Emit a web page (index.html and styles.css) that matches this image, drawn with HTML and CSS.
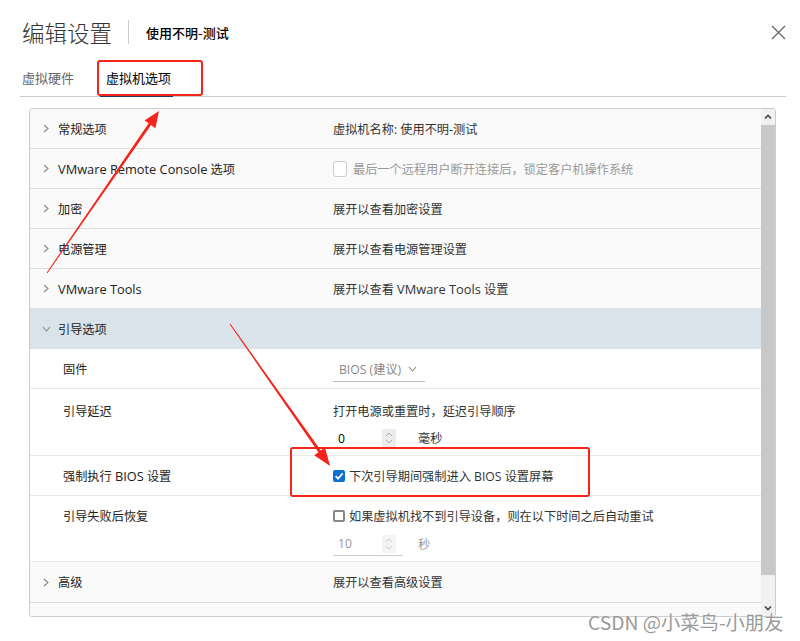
FILE: index.html
```html
<!DOCTYPE html>
<html lang="zh-CN">
<head>
<meta charset="utf-8">
<title>编辑设置</title>
<link rel="stylesheet" href="styles.css">
</head>
<body>
<div class="page">
  <header class="hdr">
    <h1 class="title">编辑设置</h1>
    <span class="vdiv"></span>
    <span class="sub">使用不明-测试</span>
    <span class="close"><svg width="15" height="15" viewBox="0 0 15 15"><path d="M1 1 L14 14 M14 1 L1 14" stroke="#666" stroke-width="1.3" fill="none"/></svg></span>
  </header>
  <nav class="tabs">
    <span class="tab">虚拟硬件</span>
    <span class="tab active">虚拟机选项</span>
  </nav>
  <section class="panel">
    <div class="list">
      <div class="row">
        <div class="lab"><svg class="chev" viewBox="0 0 6 9"><path d="M1 1 L5 4.5 L1 8" stroke="#888" fill="none" stroke-width="1.1"/></svg>常规选项</div>
        <div class="val">虚拟机名称: 使用不明-测试</div>
      </div>
      <div class="row">
        <div class="lab"><svg class="chev" viewBox="0 0 6 9"><path d="M1 1 L5 4.5 L1 8" stroke="#888" fill="none" stroke-width="1.1"/></svg><span class="en">VMware Remote Console</span>&nbsp;选项</div>
        <div class="val muted"><span class="cb-dis"></span>最后一个远程用户断开连接后，锁定客户机操作系统</div>
      </div>
      <div class="row">
        <div class="lab"><svg class="chev" viewBox="0 0 6 9"><path d="M1 1 L5 4.5 L1 8" stroke="#888" fill="none" stroke-width="1.1"/></svg>加密</div>
        <div class="val">展开以查看加密设置</div>
      </div>
      <div class="row">
        <div class="lab"><svg class="chev" viewBox="0 0 6 9"><path d="M1 1 L5 4.5 L1 8" stroke="#888" fill="none" stroke-width="1.1"/></svg>电源管理</div>
        <div class="val">展开以查看电源管理设置</div>
      </div>
      <div class="row">
        <div class="lab"><svg class="chev" viewBox="0 0 6 9"><path d="M1 1 L5 4.5 L1 8" stroke="#888" fill="none" stroke-width="1.1"/></svg><span class="en">VMware Tools</span></div>
        <div class="val">展开以查看&nbsp;<span class="en">VMware Tools</span>&nbsp;设置</div>
      </div>
      <div class="row open">
        <div class="lab"><svg class="chev-d" viewBox="0 0 9 6"><path d="M1 1 L4.5 5 L8 1" stroke="#888" fill="none" stroke-width="1.1"/></svg>引导选项</div>
      </div>
      <div class="row sub-row">
        <div class="lab">固件</div>
        <div class="val"><span class="select">BIOS (建议)<svg class="sel-chev" viewBox="0 0 9 6"><path d="M1 1 L4.5 5 L8 1" stroke="#888" fill="none" stroke-width="1.1"/></svg></span></div>
      </div>
      <div class="row sub-row tall delay">
        <div class="lab">引导延迟</div>
        <div class="val col">
          <div>打开电源或重置时，延迟引导顺序</div>
          <div class="num-line">
            <span class="num"><span class="num-v">0</span><span class="spin"><svg viewBox="0 0 14 18"><path d="M4 7 L7 4 L10 7 M4 11 L7 14 L10 11" stroke="#aaa" fill="none" stroke-width="1"/></svg></span></span>
            <span class="unit">毫秒</span>
          </div>
        </div>
      </div>
      <div class="row sub-row">
        <div class="lab">强制执行&nbsp;<span class="en">BIOS</span>&nbsp;设置</div>
        <div class="val"><span class="cb-on"><svg viewBox="0 0 12 12"><path d="M2.6 6.2 L5 8.6 L9.6 3.4" stroke="#fff" stroke-width="1.8" fill="none"/></svg></span>下次引导期间强制进入 BIOS 设置屏幕</div>
      </div>
      <div class="row sub-row tall retry">
        <div class="lab">引导失败后恢复</div>
        <div class="val col">
          <div class="cb-line"><span class="cb-off"></span>如果虚拟机找不到引导设备，则在以下时间之后自动重试</div>
          <div class="num-line">
            <span class="num dis"><span class="num-v">10</span><span class="spin light"><svg viewBox="0 0 14 18"><path d="M4 7 L7 4 L10 7 M4 11 L7 14 L10 11" stroke="#ccc" fill="none" stroke-width="1"/></svg></span></span>
            <span class="unit muted">秒</span>
          </div>
        </div>
      </div>
      <div class="row last">
        <div class="lab"><svg class="chev" viewBox="0 0 6 9"><path d="M1 1 L5 4.5 L1 8" stroke="#888" fill="none" stroke-width="1.1"/></svg>高级</div>
        <div class="val">展开以查看高级设置</div>
      </div>
    </div>
    <div class="sbar">
      <div class="sb-btn"><svg viewBox="0 0 14 16"><path d="M4 9.5 L7 6.5 L10 9.5" stroke="#444" fill="none" stroke-width="1.6"/></svg></div>
      <div class="thumb"></div>
      <div class="track"></div>
      <div class="sb-btn"><svg viewBox="0 0 14 16"><path d="M4 6.5 L7 9.5 L10 6.5" stroke="#444" fill="none" stroke-width="1.6"/></svg></div>
    </div>
  </section>
  <div class="wm">CSDN @小菜鸟-小朋友</div>
  <svg class="annot" width="800" height="641" viewBox="0 0 800 641">
    <rect x="98" y="61" width="104" height="34" rx="2" fill="none" stroke="#f5251c" stroke-width="2"/>
    <rect x="291" y="448" width="298" height="48" rx="2" fill="none" stroke="#f5251c" stroke-width="2"/>
    <polygon fill="#f5251c" points="47.4,273.3 151.1,125.1 155.4,128.2 159,111 144.5,120.4 148.7,123.3 46.6,272.7"/>
    <polygon fill="#f5251c" points="230.4,323.7 320.8,450.4 325,447.4 330,466 314.2,455.2 318.4,452.2 229.6,324.3"/>
  </svg>
</div>
</body>
</html>
```
FILE: styles.css
```css
* { box-sizing: border-box; }
html, body { margin: 0; padding: 0; background: #fff; }
body {
  font-family: "Open Sans", "Noto Sans CJK SC", sans-serif;
  color: #333;
  width: 800px;
  height: 641px;
  overflow: hidden;
}
.page { position: relative; width: 800px; height: 641px; padding-top: 12px; }

.hdr {
  display: flex;
  align-items: center;
  height: 40px;
  padding-left: 22px;
  padding-right: 14px;
}
.title {
  margin: 0;
  font-size: 22.5px;
  font-weight: 300;
  color: #333;
  line-height: 1;
  font-family: "Noto Sans CJK SC", sans-serif;
}
.vdiv {
  width: 1px;
  height: 24px;
  background: #ccc;
  margin: 0 17px 0 16px;
}
.sub {
  font-size: 13px;
  font-weight: 500;
  color: #000;
  font-family: "Noto Sans CJK SC", sans-serif;
}
.close { margin-left: auto; display: flex; }

.tabs {
  display: flex;
  align-items: center;
  height: 38px;
  margin: 7px 14px 0 20px;
  border-bottom: 1px solid #ccc;
  font-size: 13px;
  font-family: "Noto Sans CJK SC", sans-serif;
}
.tab { color: #666; padding-left: 2px; position: relative; height: 100%; display: flex; align-items: center; }
.tab.active { color: #000; margin-left: 32px; padding: 0; }
.tab.active::after {
  content: "";
  position: absolute;
  left: -6px;
  right: -2px;
  bottom: -1px;
  height: 2px;
  background: #1c3a6e;
}

.panel {
  display: flex;
  margin: 11px 0 0 29px;
  width: 747px;
  height: 509px;
  border: 1px solid #ccc;
  border-radius: 3px;
  overflow: hidden;
}
.list {
  width: 731px;
  background: #fafafa;
  font-size: 12.2px;
}
.en { font-size: 12.8px; }
.row {
  display: flex;
  align-items: center;
  height: 40px;
  background: #fafafa;
  border-bottom: 1px solid #ddd;
}
.lab {
  width: 303px;
  padding-left: 13px;
  display: flex;
  align-items: center;
  color: #222;
  white-space: nowrap;
}
.chev { width: 6px; height: 9px; margin-right: 9px; }
.chev-d { width: 9px; height: 6px; margin-right: 7px; margin-left: -1px; }
.val { display: flex; align-items: center; color: #333; white-space: nowrap; }
.muted { color: #999; }

.row.open { background: #dae3ea; border-bottom: none; }
.sub-row { background: #fff; border-bottom: 1px solid #e8e8e8; }
.sub-row .lab { padding-left: 33px; }
.row.last { height: 41px; }

.tall { align-items: flex-start; }
.delay { height: 67px; padding-top: 13px; }
.retry { height: 66px; padding-top: 11px; }
.col { flex-direction: column; align-items: flex-start; }

.cb-dis {
  width: 14px;
  height: 16px;
  border: 1px solid #ccc;
  border-radius: 3px;
  background: #fff;
  margin-right: 6px;
}
.cb-on {
  width: 12px;
  height: 12px;
  border-radius: 2px;
  background: #0b6fd1;
  margin-right: 4px;
  display: flex;
}
.cb-on svg { width: 12px; height: 12px; }
.cb-off {
  width: 12px;
  height: 12px;
  border: 2px solid #888;
  border-radius: 2px;
  margin-right: 4px;
}
.cb-line { display: flex; align-items: center; }

.select {
  display: flex;
  align-items: center;
  width: 92px;
  height: 24px;
  padding-left: 6px;
  border-bottom: 1px solid #bbb;
  color: #888;
  margin-top: 2px;
}
.sel-chev { width: 9px; height: 6px; margin-left: 7px; }

.num-line { display: flex; align-items: center; margin-top: 7px; }
.num {
  display: flex;
  align-items: center;
  width: 70px;
  height: 22px;
  padding-left: 5px;
}
.num.dis { border-bottom: 1px solid #ccc; height: 24px; }
.num-v { width: 44px; color: #000; }
.num.dis .num-v { color: #999; }
.spin {
  width: 14px;
  height: 18px;
  background: #ececec;
  display: flex;
}
.spin.light { background: #f4f4f6; }
.spin svg { width: 14px; height: 18px; }
.unit { margin-left: 15px; }

.sbar {
  width: 14px;
  display: flex;
  flex-direction: column;
  background: #f1f1f1;
}
.sb-btn { height: 16px; display: flex; }
.sb-btn svg { width: 14px; height: 16px; }
.thumb { height: 450px; background: #c8c8c8; }
.track { flex: 1; }

.wm {
  position: absolute;
  left: 588px;
  top: 610px;
  font-size: 19.3px;
  color: #9a9a9a;
  font-family: "Noto Sans CJK SC", sans-serif;
  text-shadow: 0 0 2px #fff;
  white-space: nowrap;
  line-height: 24px;
}
.annot { position: absolute; left: 0; top: 0; pointer-events: none; }
```
